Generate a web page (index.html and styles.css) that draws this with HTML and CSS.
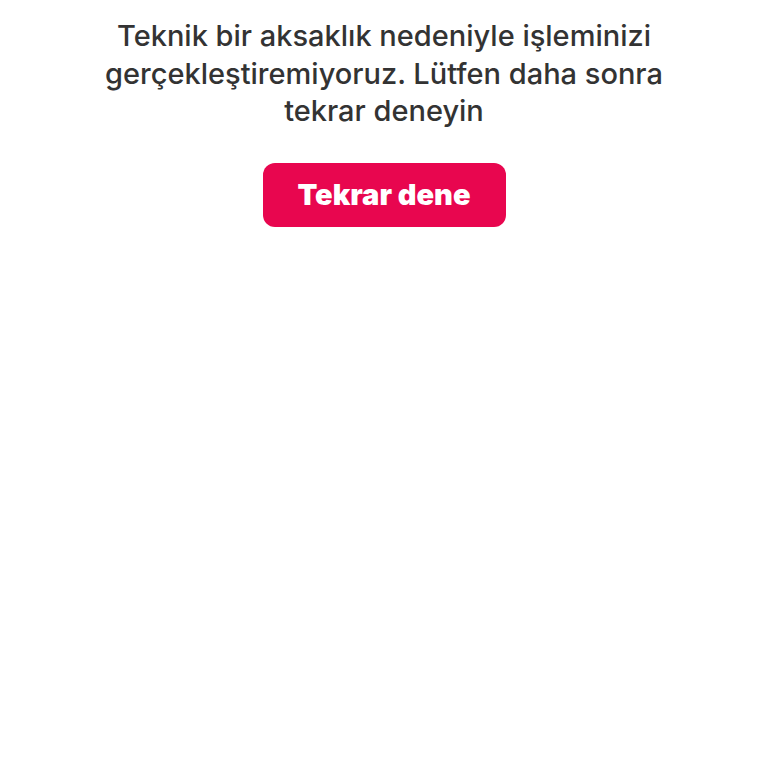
FILE: index.html
```html
<!DOCTYPE html>
<html lang="tr">
<head>
    <meta charset="UTF-8">
    <meta name="viewport" content="width=device-width, initial-scale=1.0">
    <title>Hata</title>
    <link rel="stylesheet" href="styles.css">
</head>
<body>

    <div class="error">
        <p class="error-message">Teknik bir aksaklık nedeniyle işleminizi gerçekleştiremiyoruz. Lütfen daha sonra tekrar deneyin</p>
        <button class="retry-button">Tekrar dene</button>
    </div>

</body>
</html>
```

FILE: styles.css
```css
body {
    font-family: Inter, "Noto Sans", sans-serif;
    margin: 0;
    background-color: #ffffff;
}

.error {
    display: flex;
    flex-direction: column;
    align-items: center;
    padding-top: 17px;
    text-align: center;
}

.error-message {
    margin: 0;
    width: 580px;
    font-size: 29px;
    font-weight: 500;
    line-height: 37.5px;
    color: #333333;
}

/* Retry button */
.retry-button {
    margin-top: 33px;
    width: 243px;
    height: 64px;
    font-family: Inter, "Noto Sans", sans-serif;
    font-size: 29px;
    font-weight: 900;
    color: #ffffff;
    background-color: #e8064f;
    border: none;
    border-radius: 12px;
    cursor: pointer;
}
```
